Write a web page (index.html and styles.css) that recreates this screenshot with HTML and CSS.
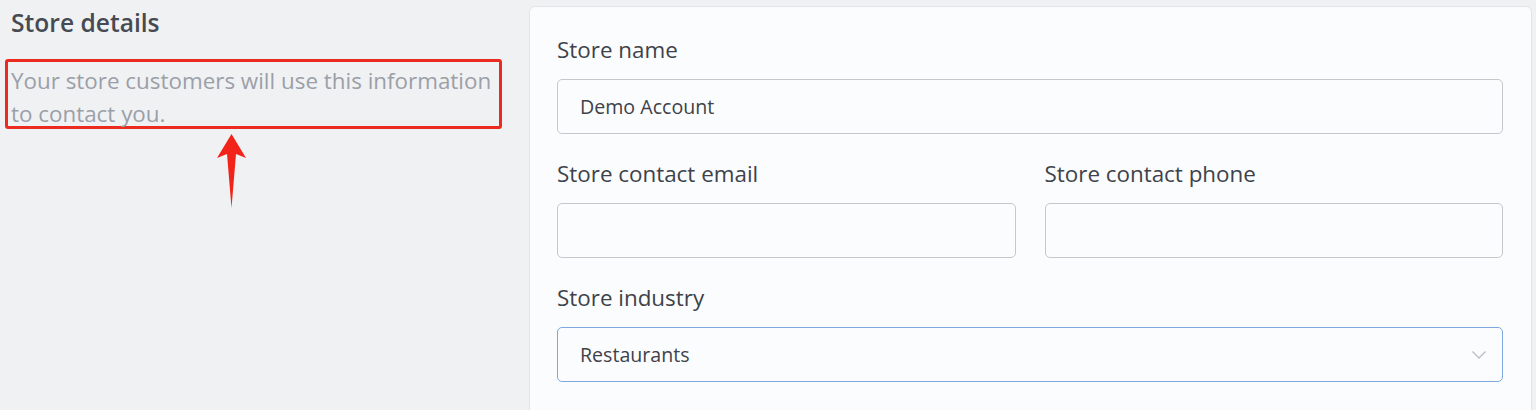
FILE: index.html
```html
<!DOCTYPE html>
<html lang="en">
<head>
<meta charset="utf-8">
<title>Store details</title>
<link rel="stylesheet" href="styles.css">
</head>
<body>
<main class="settings">
  <section class="intro">
    <h2 class="intro-title">Store details</h2>
    <p class="intro-text">Your store customers will use this information to contact you.</p>
    <svg class="pointer" width="40" height="76" viewBox="0 0 40 76" aria-hidden="true">
      <path d="M20.5 0 L35 24 L25 20 L20.5 74 L16 20 L6 24 Z" fill="#f2241a"/>
    </svg>
  </section>
  <section class="card">
    <div class="field">
      <label class="field-label" for="store-name">Store name</label>
      <input class="field-input" id="store-name" type="text" value="Demo Account">
    </div>
    <div class="field-row">
      <div class="field">
        <label class="field-label" for="store-email">Store contact email</label>
        <input class="field-input" id="store-email" type="email">
      </div>
      <div class="field">
        <label class="field-label" for="store-phone">Store contact phone</label>
        <input class="field-input" id="store-phone" type="tel">
      </div>
    </div>
    <div class="field">
      <label class="field-label" for="store-industry">Store industry</label>
      <div class="select">
        <span class="select-value" id="store-industry">Restaurants</span>
        <svg class="select-chevron" width="16" height="10" viewBox="0 0 16 10" aria-hidden="true">
          <path d="M1.5 1.5 L8 8 L14.5 1.5" fill="none" stroke="#bcbfc5" stroke-width="1.4"/>
        </svg>
      </div>
    </div>
  </section>
</main>
</body>
</html>
```

FILE: styles.css
```css
* {
  box-sizing: border-box;
}

html, body {
  margin: 0;
  height: 100%;
}

body {
  background: #f0f1f3;
  font-family: "Open Sans", "Noto Sans", sans-serif;
  overflow: hidden;
}

.settings {
  display: flex;
  align-items: flex-start;
}

.intro {
  width: 529px;
  flex: none;
  display: flex;
  flex-direction: column;
  align-items: flex-start;
}

.intro-title {
  margin: 7px 0 0 11px;
  font-size: 24.6px;
  font-weight: 600;
  line-height: 32px;
  color: #464a52;
}

.intro-text {
  margin: 20px 0 0 5px;
  width: 497px;
  height: 70px;
  padding: 2px 0 0 3px;
  border: 3px solid #eb2a20;
  border-radius: 3px;
  font-size: 22.4px;
  line-height: 33px;
  color: #9b9fa8;
}

.pointer {
  margin: 5px 0 0 211px;
}

.card {
  flex: 1;
  margin: 6px 4px 0 0;
  min-height: 420px;
  background: #fbfcfd;
  border: 1px solid #e2e4e8;
  border-radius: 6px;
  padding: 28px 28px 0 27px;
  display: flex;
  flex-direction: column;
  gap: 25px;
}

.field {
  display: flex;
  flex-direction: column;
  gap: 14px;
}

.field-row {
  display: flex;
  gap: 29px;
}

.field-row .field {
  flex: 1;
}

.field-label {
  font-size: 22.4px;
  line-height: 30px;
  color: #3e4249;
}

.field-input,
.select {
  height: 55px;
  width: 100%;
  border: 1px solid #c5c7cb;
  border-radius: 5px;
  background: #fbfcfd;
  padding: 0 22px;
  font-family: inherit;
  font-size: 19.6px;
  color: #3e4249;
}

.field-input:focus {
  outline: none;
}

.select {
  display: flex;
  align-items: center;
  justify-content: space-between;
  border-color: #7ea8de;
  padding-right: 15px;
}

.select-chevron {
  flex: none;
}
```
